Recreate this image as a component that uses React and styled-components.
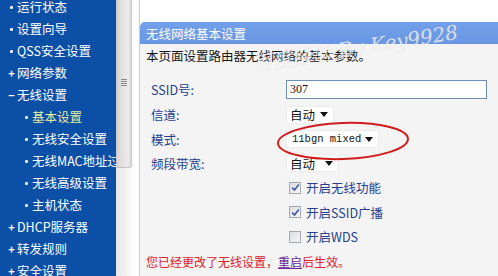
import React from "react";
import styled, { createGlobalStyle } from "styled-components";

const Global = createGlobalStyle`
  html, body { margin: 0; padding: 0; }
  body {
    width: 498px; height: 276px; overflow: hidden; background: #fff;
    font-family: "Noto Sans CJK SC", "DejaVu Sans", sans-serif;
  }
  #root { width: 498px; height: 276px; }
`;

const Page = styled.div`
  display: flex;
  width: 498px;
  height: 276px;
  overflow: hidden;
  position: relative;
`;

const Sidebar = styled.nav`
  width: 116px;
  flex: none;
  background: #0c4fa6;
  overflow: hidden;
  display: flex;
  flex-direction: column;
`;

const MenuList = styled.div`
  margin-top: -4px;
  display: flex;
  flex-direction: column;
`;

const MenuItem = styled.div`
  height: 22px;
  flex: none;
  display: flex;
  align-items: center;
  padding-left: ${(p) => (p.$sub ? 22 : 7)}px;
  color: ${(p) => (p.$active ? "#e6efa2" : "#ffffff")};
  font-size: 12.5px;
  white-space: nowrap;
  line-height: 1;
`;

const Marker = styled.span`
  width: 9px;
  flex: none;
  display: flex;
  align-items: center;
  justify-content: center;
  margin-right: 1px;
  font-size: 11px;
  font-weight: bold;
  color: #fff;
`;

const Dot = styled.span`
  width: 3px;
  height: 3px;
  background: #e8eef8;
  border-radius: 1px;
`;

const Track = styled.div`
  width: 16px;
  flex: none;
  background: linear-gradient(90deg, #ece8e9 0%, #f4f1f1 60%, #fbfafa 100%);
  display: flex;
  flex-direction: column;
`;

const Thumb = styled.div`
  height: 170px;
  margin-top: -4px;
  background: linear-gradient(90deg, #d8d4d5 0%, #e6e3e3 45%, #eceaea 80%, #d9d6d6 100%);
  border: 1px solid #c9c5c6;
  border-radius: 2px;
  display: flex;
  align-items: center;
  justify-content: center;
`;

const Grip = styled.div`
  display: flex;
  flex-direction: column;
  gap: 1px;
  span {
    display: block;
    width: 6px;
    height: 1px;
    background: #8f8c8c;
  }
`;

const Gutter = styled.div`
  width: 7px;
  flex: none;
  background: #fdfdfd;
`;

const Main = styled.main`
  flex: 1;
  display: flex;
  flex-direction: column;
  padding-top: 22px;
  background: #ffffff;
  border-left: 1px solid #dccba6;
  position: relative;
`;

const TitleBar = styled.div`
  height: 22px;
  flex: none;
  background: linear-gradient(180deg, #73a0ea 0%, #6996e2 100%);
  border-top-left-radius: 5px;
  color: #fff;
  font-size: 12.5px;
  display: flex;
  align-items: center;
  padding-left: 6px;
`;

const Body = styled.div`
  flex: 1;
  background: #f4f4f4;
  display: flex;
  flex-direction: column;
  padding-left: 6px;
`;

const Desc = styled.div`
  height: 22px;
  display: flex;
  align-items: center;
  font-size: 12.5px;
  color: #141414;
  margin-bottom: 11px;
`;

const Row = styled.div`
  height: ${(p) => p.$h}px;
  display: flex;
  align-items: center;
`;

const Label = styled.div`
  width: 140px;
  flex: none;
  padding-left: 5px;
  box-sizing: border-box;
  font-size: 12.5px;
  color: #24408e;
`;

const TextInput = styled.div`
  width: 201px;
  height: 19px;
  box-sizing: border-box;
  border: 1px solid #6f8db7;
  background: #fff;
  font-family: "Liberation Serif", serif;
  font-size: 12px;
  color: #111;
  display: flex;
  align-items: center;
  padding-left: 3px;
`;

const Select = styled.div`
  width: ${(p) => p.$w}px;
  height: 18px;
  box-sizing: border-box;
  background: #fff;
  border: 1px solid #ededed;
  display: flex;
  align-items: center;
  justify-content: space-between;
  padding: 0 5px 0 ${(p) => (p.$mono ? 5 : 3)}px;
  color: #111;
  font-size: ${(p) => (p.$mono ? 10.5 : 12.5)}px;
  font-family: ${(p) =>
    p.$mono
      ? `"Liberation Mono", monospace`
      : `"Noto Sans CJK SC", sans-serif`};
`;

const Arrow = styled.span`
  width: 0;
  height: 0;
  border-left: 4px solid transparent;
  border-right: 4px solid transparent;
  border-top: 5px solid #111;
`;

const Check = styled.span`
  width: 12px;
  height: 12px;
  box-sizing: border-box;
  border: 1px solid #a4a8b0;
  background: linear-gradient(135deg, #dcdde2, #f6f6f8);
  margin-left: 3px;
  margin-right: 5px;
  display: flex;
  align-items: center;
  justify-content: center;
`;

const CheckText = styled.span`
  font-size: 12.5px;
  color: #24408e;
`;

const Notice = styled.div`
  height: 22px;
  display: flex;
  align-items: center;
  font-size: 12px;
  color: #e0202a;
  margin-top: 1px;
`;

const Link = styled.span`
  color: #6a2592;
  text-decoration: underline;
`;

const Watermark = styled.div`
  position: absolute;
  left: 112px;
  top: 35px;
  transform: rotate(-9deg);
  font-size: 20px;
  font-style: italic;
  font-family: "DejaVu Serif", serif;
  color: rgba(255, 255, 255, 0.7);
  text-shadow: 0 0 1px rgba(160, 160, 160, 0.35);
  white-space: nowrap;
  pointer-events: none;
`;

const Ellipse = styled.svg`
  position: absolute;
  left: 133px;
  top: 120px;
  pointer-events: none;
`;

const CheckMark = () => (
  <svg width="9" height="9" viewBox="0 0 9 9">
    <path d="M1.2 4.6 L3.5 7 L7.8 1.6" fill="none" stroke="#3a5aa8" strokeWidth="1.6" />
  </svg>
);

const menu = [
  { t: "运行状态", m: "dot" },
  { t: "设置向导", m: "dot" },
  { t: "QSS安全设置", m: "dot" },
  { t: "网络参数", m: "plus" },
  { t: "无线设置", m: "minus" },
  { t: "基本设置", m: "dot", sub: true, active: true },
  { t: "无线安全设置", m: "dot", sub: true },
  { t: "无线MAC地址过滤", m: "dot", sub: true },
  { t: "无线高级设置", m: "dot", sub: true },
  { t: "主机状态", m: "dot", sub: true },
  { t: "DHCP服务器", m: "plus" },
  { t: "转发规则", m: "plus" },
  { t: "安全设置", m: "plus" },
];

export default function App() {
  return (
    <>
      <Global />
      <Page>
        <Sidebar>
          <MenuList>
            {menu.map((it) => (
              <MenuItem key={it.t} $sub={it.sub} $active={it.active}>
                <Marker>
                  {it.m === "dot" ? <Dot /> : it.m === "plus" ? "+" : "−"}
                </Marker>
                {it.t}
              </MenuItem>
            ))}
          </MenuList>
        </Sidebar>
        <Track>
          <Thumb>
            <Grip>
              <span />
              <span />
              <span />
              <span />
            </Grip>
          </Thumb>
        </Track>
        <Gutter />
        <Main>
          <TitleBar>无线网络基本设置</TitleBar>
          <Body>
            <Desc>本页面设置路由器无线网络的基本参数。</Desc>
            <Row $h={25}>
              <Label>SSID号:</Label>
              <TextInput>307</TextInput>
            </Row>
            <Row $h={25}>
              <Label>信道:</Label>
              <Select $w={48}>
                自动 <Arrow />
              </Select>
            </Row>
            <Row $h={24}>
              <Label>模式:</Label>
              <Select $w={93} $mono>
                11bgn mixed <Arrow />
              </Select>
            </Row>
            <Row $h={24}>
              <Label>频段带宽:</Label>
              <Select $w={53}>
                自动 <Arrow />
              </Select>
            </Row>
            <Row $h={25}>
              <Label />
              <Check>
                <CheckMark />
              </Check>
              <CheckText>开启无线功能</CheckText>
            </Row>
            <Row $h={24}>
              <Label />
              <Check>
                <CheckMark />
              </Check>
              <CheckText>开启SSID广播</CheckText>
            </Row>
            <Row $h={25}>
              <Label />
              <Check />
              <CheckText>开启WDS</CheckText>
            </Row>
            <Notice>
              您已经更改了无线设置，<Link>重启</Link>后生效。
            </Notice>
          </Body>
          <Watermark>百度经验 By Key9928</Watermark>
          <Ellipse width="140" height="44" viewBox="0 0 140 44">
            <ellipse
              cx="70"
              cy="21"
              rx="65"
              ry="18"
              fill="none"
              stroke="#d01c1c"
              strokeWidth="2"
              transform="rotate(-2 70 21)"
            />
          </Ellipse>
        </Main>
      </Page>
    </>
  );
}
